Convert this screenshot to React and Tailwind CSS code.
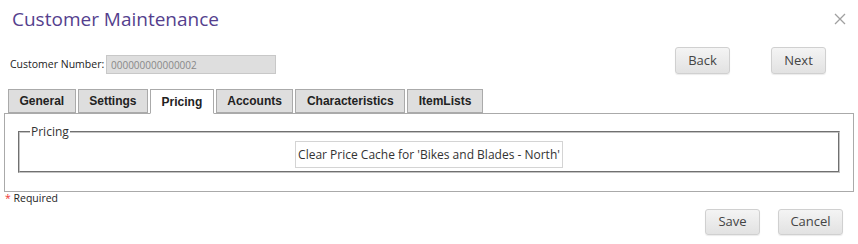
import React from "react";

const tabs = ["General", "Settings", "Pricing", "Accounts", "Characteristics", "ItemLists"];

const btn =
  "h-[26px] rounded-[3px] border border-[#d0d0d0] bg-gradient-to-b from-[#f4f4f4] to-[#e2e2e2] text-[13px] text-[#444] shadow-[0_1px_1px_rgba(0,0,0,0.08)]";

export default function App() {
  return (
    <div className="relative w-[858px] h-[244px] bg-white font-['Open_Sans',sans-serif] text-[#333]">
      {/* Header */}
      <div className="flex items-start justify-between pl-[12px] pr-[12px] pt-[5px]">
        <h1 className="text-[19px] leading-[28px] text-[#553f8e]">Customer Maintenance</h1>
        <button className="mt-[8px] text-[#999]">
          <svg width="12" height="12" viewBox="0 0 12 12">
            <path d="M1 1L11 11M11 1L1 11" stroke="#a0a0a0" strokeWidth="1.3" />
          </svg>
        </button>
      </div>

      {/* Customer number + nav */}
      <div className="flex items-start mt-[14px] h-[26px]">
        <div className="flex items-center pl-[10px] mt-[8px]">
          <span className="text-[10.5px] text-[#222] w-[96px]">Customer Number:</span>
          <input
            readOnly
            value="000000000000002"
            className="w-[170px] h-[19px] border border-[#c8c8c8] bg-[#dedede] px-[4px] text-[10px] text-[#888] outline-none"
          />
        </div>
        <button className={`${btn} ml-auto w-[55px] h-[27px]`}>Back</button>
        <button className={`${btn} ml-[41px] mr-[32px] w-[55px] h-[27px]`}>Next</button>
      </div>

      {/* Tabs */}
      <div className="flex gap-[2px] pl-[8px] mt-[16px] relative z-10">
        {tabs.map((t) => (
          <div
            key={t}
            className={`h-[24px] px-[10.5px] flex items-center border border-[#aaa] text-[12px] font-bold text-[#222] font-['Liberation_Sans',Arial,sans-serif] ${
              t === "Pricing" ? "bg-white border-b-white h-[25px]" : "bg-[#dedede]"
            }`}
          >
            {t}
          </div>
        ))}
      </div>

      {/* Panel */}
      <div className="ml-[4px] mt-[-1px] w-[850px] h-[79px] border border-[#aaa] px-[13px] pt-[12px]">
        <fieldset className="border-2 [border-style:groove] border-[#c4c4c4] h-[47px] px-[0px] flex justify-center">
          <legend className="ml-[10px] px-[1px] text-[12px] leading-[12px] text-[#333]">Pricing</legend>
          <button className="mt-[3px] h-[27px] w-[268px] border border-[#d4d4d4] bg-white text-[12px] text-[#333]">
            Clear Price Cache for 'Bikes and Blades - North'
          </button>
        </fieldset>
      </div>

      {/* Required */}
      <div className="pl-[5px] mt-[-1px] text-[10.5px] text-[#222]">
        <span className="text-[#e33]">*</span> Required
      </div>

      {/* Footer */}
      <div className="flex justify-end gap-[18px] pr-[15px] mt-[2px]">
        <button className={`${btn} w-[55px]`}>Save</button>
        <button className={`${btn} w-[65px]`}>Cancel</button>
      </div>
    </div>
  );
}
